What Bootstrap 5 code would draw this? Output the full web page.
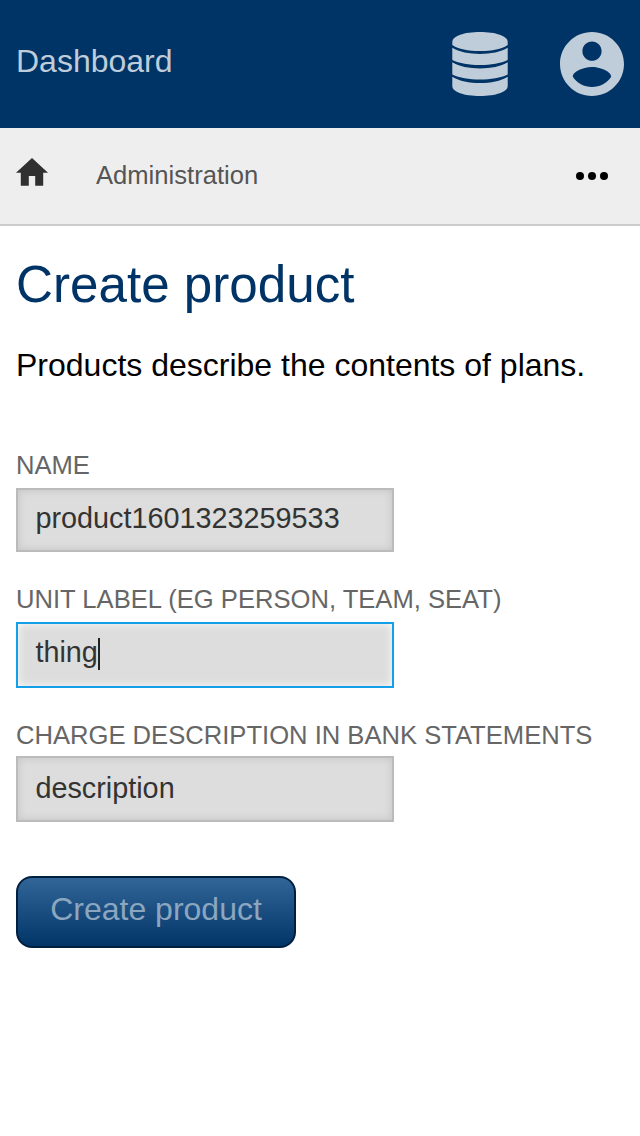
<!DOCTYPE html>
<html lang="en">
<head>
<meta charset="utf-8">
<meta name="viewport" content="width=device-width, initial-scale=1">
<title>Create product</title>
<link href="https://cdn.jsdelivr.net/npm/bootstrap@5.3.0/dist/css/bootstrap.min.css" rel="stylesheet">
<style>
body{font-family:"Liberation Sans",Arial,sans-serif;color:#000;background:#fff}
.topbar{height:128px;background:#036}
.brand-link{font-size:32px;line-height:38px;color:#bfccd9;padding-bottom:6px}
.top-icons{gap:52px;color:#bfccd9}
.crumbs{height:98px;background:#eee;border-bottom:2px solid #ccc}
.crumb-link{font-size:25.6px;line-height:30px;color:#555;padding-bottom:2px}
.home-link{margin-right:48px;padding-bottom:8px}
.page-title{font-size:51.2px;line-height:60px;color:#036;padding-top:29px;margin:0;font-weight:400}
.intro{font-size:32px;line-height:38px;margin:31px 0 66px}
.field-label{font-size:25.6px;line-height:30px;color:#666;text-transform:uppercase;white-space:nowrap;margin-bottom:8px}
.field-label.tight{margin-bottom:6px}
.field-box{width:378px;height:66px;border:2px solid #bbb;background:#ddd;color:#333;font-size:28.8px;line-height:34px;padding:11px 17px 0 17.4px;box-shadow:inset 0 0 8px rgba(0,0,0,.12)}
.field-box.first{height:64px}
.field-box.low{padding-top:13px}
.field-box.active{border-color:#14a0e8;box-shadow:inset 0 0 8px rgba(255,255,255,.9)}
.caret{width:2px;height:32px;background:#222;margin:3px 0 0 .6px}
.create-btn{width:280px;height:72px;border:2px solid #00203f;border-radius:16px;background:linear-gradient(#369,#036) border-box;font-size:32px;line-height:38px;padding:0 0 6px;margin-top:54px}
.create-btn,.create-btn:hover{color:#8ca6bf}
</style>
</head>
<body>
<header class="topbar d-flex align-items-center justify-content-between px-3">
<a class="brand-link text-decoration-none" href="#">Dashboard</a>
<div class="top-icons d-flex align-items-center">
<svg width="56" height="64" viewBox="-.3 0 56.600 64" preserveAspectRatio="none" fill="currentColor"><path d="M0 10C0 4 12 0 28 0S56 4 56 10V13C50 17 40 19 28 19S6 17 0 13Z"/><path d="M0 15.800C7 20 17 22 28 22S49 20 56 15.800V28C49 31.500 39 33 28 33S7 31.500 0 28Z"/><path d="M0 30.300C7 34.500 17 36.500 28 36.500S49 34.500 56 30.300V42.500C49 46 39 47.500 28 47.500S7 46 0 42.500Z"/><path d="M0 44.700C7 49 17 51 28 51S49 49 56 44.700V54C56 60 44 64 28 64S0 60 0 54Z"/></svg>
<svg width="64" height="64" viewBox="2 2 20 20" fill="currentColor"><path d="M12 2C6.480 2 2 6.480 2 12s4.480 10 10 10 10-4.480 10-10S17.520 2 12 2zm0 3c1.660 0 3 1.340 3 3s-1.340 3-3 3-3-1.340-3-3 1.340-3 3-3zm0 14.200c-2.500 0-4.710-1.280-6-3.220.030-1.990 4-3.080 6-3.080 1.990 0 5.970 1.090 6 3.080-1.290 1.940-3.500 3.220-6 3.220z"/></svg>
</div>
</header>
<nav class="crumbs d-flex align-items-center px-3">
<a class="home-link d-flex" href="#" aria-label="Home"><svg width="32" height="28" viewBox="2 3 20 17.200" preserveAspectRatio="none" fill="#303030"><path d="M10 20v-6h4v6h5v-8h3L12 3 2 12h3v8z"/></svg></a>
<a class="crumb-link text-decoration-none" href="#">Administration</a>
<svg class="ms-auto me-3" width="32" height="8" viewBox="0 0 32 8"><circle cx="4" cy="4" r="4"/><circle cx="16" cy="4" r="4"/><circle cx="28" cy="4" r="4"/></svg>
</nav>
<main class="px-3">
<h1 class="page-title">Create product</h1>
<p class="intro">Products describe the contents of plans.</p>
<form>
<div class="d-flex flex-column align-items-start">
<div class="field-label">Name</div>
<div class="field-box first">product1601323259533</div>
</div>
<div class="d-flex flex-column align-items-start mt-2 pt-4">
<div class="field-label">Unit label (eg person, team, seat)</div>
<div class="field-box active d-flex"><span>thing</span><span class="caret"></span></div>
</div>
<div class="d-flex flex-column align-items-start mt-2 pt-4">
<div class="field-label tight">Charge description in bank statements</div>
<div class="field-box low">description</div>
</div>
<button type="button" class="btn create-btn">Create product</button>
</form>
</main>
<script src="https://cdn.jsdelivr.net/npm/bootstrap@5.3.0/dist/js/bootstrap.bundle.min.js"></script>
</body>
</html>
